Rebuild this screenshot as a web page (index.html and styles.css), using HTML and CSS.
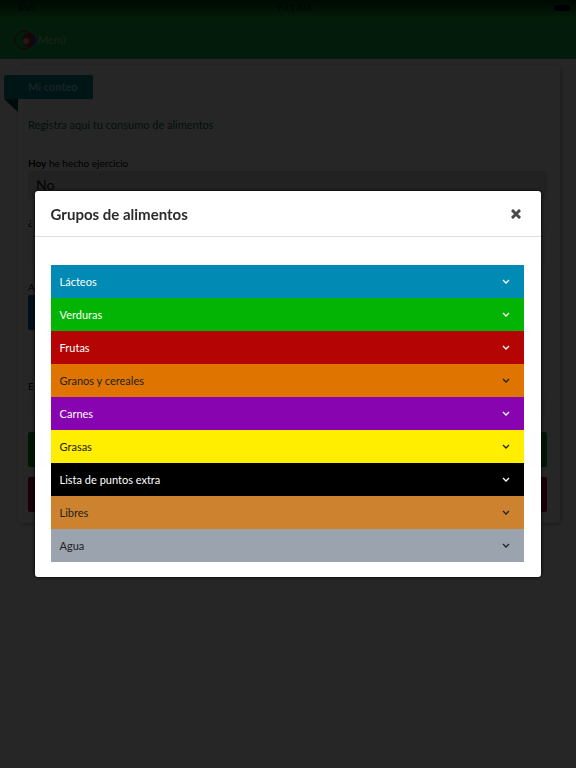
FILE: index.html
```html
<!DOCTYPE html>
<html lang="es">
<head>
  <meta charset="UTF-8">
  <meta name="viewport" content="width=device-width, initial-scale=1.0">
  <title>Mi conteo</title>
  <link rel="stylesheet" href="styles.css">
</head>
<body>
  <header class="topbar">
    <div class="status">
      <span>iPad</span>
      <span>9:41 AM</span>
      <span class="battery"></span>
    </div>
    <a class="menu" href="#">
      <svg class="logo" viewBox="0 0 24 20" width="24" height="20">
        <ellipse cx="10" cy="10" rx="9" ry="9" fill="none" stroke="#803038" stroke-width="1"/>
        <circle cx="15" cy="10" r="7" fill="#b02038"/>
        <path d="M17 5a6 6 0 0 1 1 11z" fill="#5030b0"/>
        <circle cx="12" cy="11" r="3" fill="#c8b0a0"/>
      </svg>
      <span>Menú</span>
    </a>
  </header>

  <main class="card">
    <h1 class="ribbon">Mi conteo</h1>
    <p class="intro">Registra aquí tu consumo de alimentos</p>
    <form class="form">
      <div class="field">
        <label for="exercise"><b>Hoy</b> he hecho ejercicio</label>
        <select id="exercise">
          <option>No</option>
        </select>
      </div>
      <div class="field">
        <label for="amount">¿</label>
        <input id="amount" type="text">
      </div>
      <div class="field">
        <label for="add">A</label>
        <button id="add" class="btn blue" type="button"></button>
      </div>
      <div class="field">
        <label for="date">E</label>
        <input id="date" type="text">
      </div>
      <button class="btn green" type="button" aria-labelledby="title"></button>
      <button class="btn red" type="button" aria-labelledby="title"></button>
    </form>
  </main>

  <div class="overlay">
    <section class="modal" role="dialog" aria-labelledby="title">
      <div class="modal-header">
        <h2 id="title">Grupos de alimentos</h2>
        <button class="close" type="button" aria-label="Cerrar">
          <svg viewBox="0 0 10 10" width="10" height="10"><path d="M2 2l6 6M8 2l-6 6" stroke="currentColor" stroke-width="3" stroke-linecap="square"/></svg>
        </button>
      </div>
      <div class="groups">
        <button class="group lacteos" type="button">Lácteos <svg class="chevron" viewBox="0 0 8 6"><path d="M1 1l3 3 3-3"/></svg></button>
        <button class="group verduras" type="button">Verduras <svg class="chevron" viewBox="0 0 8 6"><path d="M1 1l3 3 3-3"/></svg></button>
        <button class="group frutas" type="button">Frutas <svg class="chevron" viewBox="0 0 8 6"><path d="M1 1l3 3 3-3"/></svg></button>
        <button class="group granos" type="button">Granos y cereales <svg class="chevron" viewBox="0 0 8 6"><path d="M1 1l3 3 3-3"/></svg></button>
        <button class="group carnes" type="button">Carnes <svg class="chevron" viewBox="0 0 8 6"><path d="M1 1l3 3 3-3"/></svg></button>
        <button class="group grasas" type="button">Grasas <svg class="chevron" viewBox="0 0 8 6"><path d="M1 1l3 3 3-3"/></svg></button>
        <button class="group extra" type="button">Lista de puntos extra <svg class="chevron" viewBox="0 0 8 6"><path d="M1 1l3 3 3-3"/></svg></button>
        <button class="group libres" type="button">Libres <svg class="chevron" viewBox="0 0 8 6"><path d="M1 1l3 3 3-3"/></svg></button>
        <button class="group agua" type="button">Agua <svg class="chevron" viewBox="0 0 8 6"><path d="M1 1l3 3 3-3"/></svg></button>
      </div>
    </section>
  </div>
</body>
</html>
```
FILE: styles.css
```css
* {
  box-sizing: border-box;
}
body {
  margin: 0;
  min-height: 100vh;
  font-family: Lato, "Liberation Sans", sans-serif;
  font-size: 11px;
  line-height: 16px;
  background: #fff;
}
button, input, select {
  font: inherit;
  border: none;
}
h1, h2, p {
  margin: 0;
}

/* Top bar */
.topbar {
  height: 59px;
  background: linear-gradient(#004010, #18b440 18px, #18b450);
}
.status {
  display: grid;
  grid-template-columns: 1fr 1fr 1fr;
  align-items: center;
  height: 16px;
  padding: 0 6px 0 18px;
  font-size: 9px;
  color: #002008;
}
.status span:nth-child(2) {
  text-align: center;
}
.battery {
  justify-self: end;
  width: 16px;
  height: 6px;
  border-radius: 2px;
  background: #000;
}
.menu {
  display: inline-flex;
  align-items: center;
  padding: 14px 14px 0;
  color: #90f0a8;
  text-decoration: none;
}

/* Page card */
.card {
  margin: 6px 16px 0 18px;
  padding: 10px 13px 11px 10px;
  border-radius: 4px;
  box-shadow: 1px 1px 4px #aaa;
}
.ribbon {
  position: relative;
  width: 89px;
  height: 24px;
  margin-left: -24px;
  padding-left: 24px;
  border-radius: 2px;
  background: #009090;
  color: #a0e4e8;
  font-size: 11px;
  font-weight: 700;
  line-height: 24px;
}
.ribbon::after {
  content: "";
  position: absolute;
  top: 100%;
  left: 0;
  border-top: 13px solid #005048;
  border-left: 14px solid transparent;
}
.intro {
  margin-top: 18px;
  color: #007848;
}
.form {
  display: flex;
  flex-direction: column;
  margin-top: 22px;
}
.field {
  display: flex;
  flex-direction: column;
  margin-bottom: 14px;
}
.field select {
  appearance: none;
  height: 28px;
  padding: 0 8px;
  background: #e4e4e4;
  color: #111;
  font-size: 14px;
}
.field input {
  height: 36px;
  background: #f4f4f4;
}
.field label {
  color: #000;
  font-size: 10px;
}
.btn {
  height: 35px;
  border-radius: 2px;
}
.field .btn {
  width: 160px;
  margin-bottom: 34px;
}
#date {
  height: 24px;
}
.blue {
  background: #0068b8;
}
.green {
  background: #009818;
}
.red {
  margin-top: 10px;
  background: #a80028;
}

/* Modal */
.overlay {
  position: fixed;
  inset: 0;
  display: flex;
  align-items: center;
  justify-content: center;
  background: rgba(0, 0, 0, 0.85);
}
.modal {
  width: 88%;
  background: #fff;
  border-radius: 3px;
  box-shadow: 0 0 4px #000;
}
.modal-header {
  display: flex;
  align-items: center;
  justify-content: space-between;
  height: 46px;
  padding: 0 16px;
  border-bottom: 1px solid #ddd;
}
.modal-header h2 {
  font-size: 15px;
  font-weight: 700;
  color: #2b2b2b;
}
.close {
  display: flex;
  padding: 4px;
  background: none;
  color: #4a4a4a;
  cursor: pointer;
}
.groups {
  display: flex;
  flex-direction: column;
  padding: 28px 17px 15px 16px;
}
.group {
  display: flex;
  align-items: center;
  justify-content: space-between;
  height: 33px;
  padding: 0 14px 0 9px;
  color: #fff;
  font-size: 11px;
  text-align: left;
  cursor: pointer;
}
.chevron {
  width: 8px;
  height: 6px;
  fill: none;
  stroke: currentColor;
  stroke-width: 1.3;
}
.lacteos {
  background: #008ab4;
}
.verduras {
  background: #04b404;
}
.frutas {
  background: #b40404;
}
.granos {
  background: #df7401;
  color: #222;
}
.carnes {
  background: #8904b1;
}
.grasas {
  background: #ffee00;
  color: #222;
}
.extra {
  background: #000;
}
.libres {
  background: #cc822e;
  color: #222;
}
.agua {
  background: #9aa3ae;
  color: #222;
}
```
